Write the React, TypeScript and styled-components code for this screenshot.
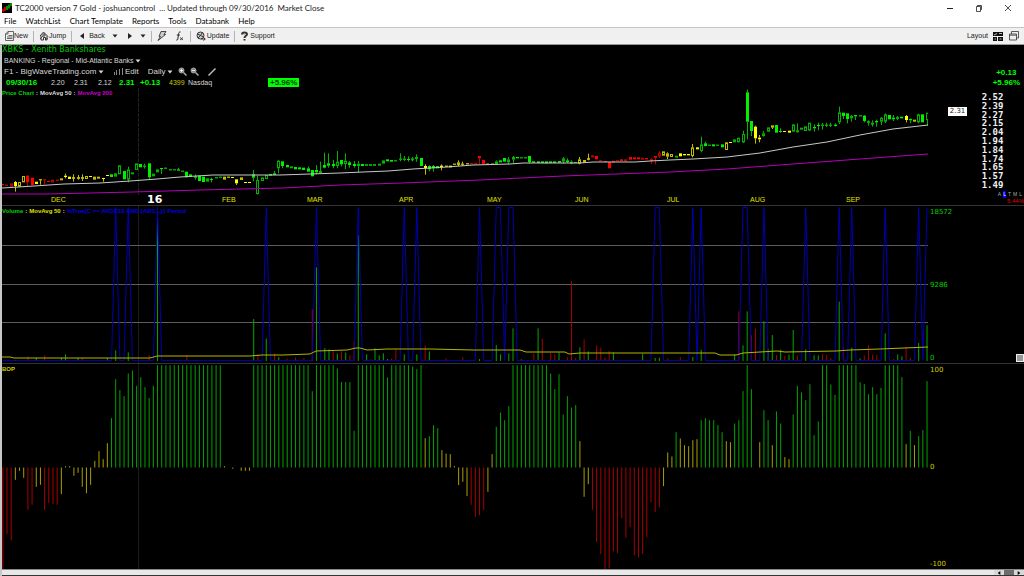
import React from 'react';
import styled, { createGlobalStyle } from 'styled-components';

const sans = '"Liberation Sans", Arial, sans-serif';
const wide = '"DejaVu Sans", Verdana, sans-serif';
const ui = 'Lato, "Noto Sans", sans-serif';

const GREEN = '#00ff00';
const YELLOW = '#ffff00';
const RED = '#ff0000';

const Global = createGlobalStyle`
  * { box-sizing: border-box; }
  body { margin: 0; background: #000; }
  button, select {
    appearance: none; border: 0; margin: 0; padding: 0;
    background: transparent; color: inherit; font: inherit;
  }
  svg { display: block; flex: none; }
`;

/* ---------- market data ---------- */

const STEP = 4.182;
const barX = (i: number) => 0.8 + STEP * i;
const full = (n: number): number[] => Array(n).fill(307);

const bop: number[] = [
  -305, -199, -219, -37, -10, -31, -127, -112, -58, -52, -127, -107, -110, -112, -80, 4, 4, -25, -16, -58,
  -77, -52, 20, 49, 25, 73, 148, 265, 232, 214, 282, 291, 245, 271, 241, 208, 245, ...full(16),
  4, 0, -4, 0, -10, -10, -10, ...full(14), 229, ...full(5), 297, 256, 256, 256, 110, ...full(7), 270,
  ...full(5), 303, 295, 307, 88, 94, 127, 118, 52, 42, 40, 4, -53, -43, -86, -112, -148, -143, -128, -73,
  40, 122, 165, 142, 184, ...full(9), 282, 235, 280, 159, 214, 180, 187, 79, -88, -50, -127, -223, -260,
  -305, -302, -251, -257, -152, -211, -179, -264, -270, -260, -210, -104, -134, -119, -56, 45, 33, 106, 87,
  67, 64, 82, 85, 142, 148, 142, 142, 127, 106, 79, 76, 132, 142, 229, 307, 235, 0, 76, 172, 142, 67, 168,
  132, 31, 25, 159, 245, 225, 202, 250, 97, 138, 307, 307, 249, 218, ...full(5), 256, 250, 220, 241, 220,
  239, ...full(4), 271, 70, 110, 67, 94, 112, 259,
];

/* index, bar height, direction */
const volume: [number, number, 'g' | 'r'][] = [
  [3, 3, 'g'], [6, 14, 'r'], [8, 10, 'g'], [10, 17, 'r'], [12, 3, 'g'], [14, 10, 'g'], [15, 20, 'g'],
  [18, 10, 'g'], [19, 10, 'r'], [25, 9, 'g'], [27, 32, 'g'], [30, 26, 'g'], [35, 17, 'r'], [37, 422, 'g'],
  [42, 3, 'r'], [44, 18, 'r'], [46, 3, 'g'], [60, 126, 'g'], [61, 20, 'r'], [63, 67, 'g'], [65, 23, 'r'],
  [66, 12, 'g'], [68, 7, 'r'], [70, 11, 'r'], [72, 9, 'r'], [74, 155, 'r'], [75, 281, 'g'], [77, 39, 'g'],
  [78, 35, 'g'], [79, 32, 'r'], [80, 22, 'g'], [81, 29, 'r'], [82, 25, 'g'], [83, 17, 'r'], [84, 59, 'r'],
  [85, 377, 'g'], [87, 20, 'g'], [88, 5, 'r'], [89, 38, 'g'], [90, 17, 'g'], [91, 23, 'g'], [92, 6, 'g'],
  [93, 8, 'r'], [94, 35, 'r'], [96, 20, 'g'], [99, 20, 'g'], [101, 47, 'r'], [102, 29, 'g'], [103, 3, 'r'],
  [105, 3, 'g'], [106, 8, 'r'], [110, 11, 'r'], [114, 6, 'g'], [118, 48, 'g'], [119, 20, 'g'],
  [121, 23, 'g'], [122, 98, 'g'], [124, 5, 'g'], [127, 22, 'r'], [128, 98, 'g'], [129, 67, 'r'],
  [131, 24, 'r'], [132, 20, 'r'], [133, 26, 'g'], [135, 11, 'r'], [136, 239, 'r'], [137, 9, 'r'],
  [138, 41, 'g'], [139, 65, 'r'], [140, 29, 'g'], [142, 47, 'r'], [143, 40, 'r'], [144, 10, 'r'],
  [145, 30, 'r'], [146, 26, 'g'], [153, 21, 'g'], [156, 9, 'g'], [157, 10, 'g'], [159, 8, 'r'],
  [162, 12, 'r'], [165, 12, 'g'], [167, 34, 'g'], [175, 20, 'g'], [176, 149, 'r'], [177, 47, 'g'],
  [178, 149, 'g'], [179, 77, 'r'], [180, 97, 'r'], [182, 119, 'g'], [183, 37, 'g'], [184, 78, 'g'],
  [185, 18, 'r'], [186, 34, 'g'], [187, 15, 'r'], [188, 19, 'g'], [189, 93, 'g'], [190, 17, 'r'],
  [192, 35, 'g'], [194, 17, 'g'], [195, 17, 'g'], [196, 20, 'r'], [197, 18, 'r'], [198, 9, 'r'],
  [200, 178, 'g'], [201, 41, 'r'], [203, 40, 'g'], [205, 8, 'g'], [206, 17, 'r'], [207, 47, 'r'],
  [208, 19, 'r'], [209, 18, 'r'], [211, 83, 'g'], [213, 6, 'r'], [214, 20, 'g'], [215, 14, 'g'],
  [216, 41, 'r'], [217, 9, 'r'], [219, 54, 'g'], [221, 107, 'g'],
];

const signals = new Set([
  27, 30, 37, 63, 75, 85, 96, 99, 114, 118, 119, 121, 122, 156, 157, 165, 167, 177, 178, 182, 192, 200,
  203, 211, 219, 221,
]);

/* body top, body bottom, colour + f(illed) / h(ollow), high, low */
type Candle = [number, number, string, number?, number?];
const candles: Candle[] = [
  [297, 300, 'rf'], [299, 302, 'rf'], [295, 305, 'rh'], [291, 303, 'yf', 288, 320], [291, 305, 'yh'],
  [273, 292, 'yh'], [272, 292, 'rf', 270, 305], [278, 300, 'rf'], [290, 297, 'yf'], [283, 286, 'yf', 283, 299],
  [283, 286, 'rf', 283, 298], [288, 291, 'rf'], [284, 292, 'rh'], [284, 287, 'rf'], [280, 286, 'yh'],
  [272, 276, 'yf', 266, 280], [275, 282, 'yf'], [277, 281, 'yf', 268, 290], [277, 281, 'yf', 270, 284],
  [277, 281, 'yf', 268, 288], [273, 282, 'yh'], [273, 276, 'yf'], [275, 284, 'yh'], [275, 281, 'yh'],
  [279, 282, 'yf', 279, 290], [270, 273, 'yf'], [268, 276, 'gf'], [265, 275, 'gh'], [241, 268, 'gh'],
  [258, 283, 'gf'], [253, 284, 'gh', 245, 292], [262, 266, 'gh'], [235, 255, 'gh'], [237, 247, 'gf'],
  [242, 245, 'gf', 236, 251], [235, 277, 'gf', 235, 283], [266, 274, 'gh'], [253, 262, 'gh'],
  [249, 252, 'gf', 249, 267], [248, 251, 'gf'], [253, 256, 'gf'], [253, 256, 'gf'], [253, 257, 'gf', 249, 257],
  [257, 260, 'gf'], [260, 277, 'gf'], [268, 276, 'gf'], [274, 278, 'gf', 268, 284], [272, 288, 'gf'],
  [275, 291, 'gf'], [280, 290, 'gh'], [282, 285, 'gf', 278, 292], [277, 280, 'gf'], [275, 278, 'gf'],
  [275, 284, 'yh'], [275, 278, 'yf'], [276, 279, 'yf'], [283, 295, 'yf', 283, 300], [277, 285, 'yh'],
  [291, 294, 'yf'], [291, 294, 'yf'], [268, 278, 'gf', 255, 289], [285, 327, 'gh', 272, 328],
  [277, 288, 'gh'], [270, 282, 'gh'], [267, 272, 'gf'], [265, 270, 'gf', 258, 270], [227, 250, 'gh', 225, 265],
  [229, 243, 'gf', 229, 250], [240, 247, 'gf'], [244, 250, 'gh'], [246, 253, 'gf'], [247, 253, 'gf'],
  [248, 255, 'gf'], [250, 260, 'gf', 244, 260], [255, 274, 'gf'], [255, 262, 'gf', 240, 268],
  [258, 264, 'gh', 230, 264], [240, 248, 'gf', 203, 250], [235, 242, 'gf', 205, 248], [237, 243, 'gf', 225, 250],
  [230, 243, 'gh', 198, 250], [225, 238, 'gf', 225, 244], [227, 237, 'gh', 205, 252], [232, 240, 'gf', 228, 248],
  [237, 243, 'gf', 228, 248], [236, 243, 'gh', 228, 262], [237, 243, 'gf'], [238, 242, 'gf'], [238, 242, 'gf'],
  [238, 242, 'gf'], [236, 242, 'gh'], [226, 236, 'gh'], [223, 229, 'gf'], [225, 230, 'gf'], [226, 229, 'gf'],
  [221, 224, 'gf', 205, 229], [221, 224, 'gf', 213, 228], [222, 225, 'gf', 214, 230], [220, 225, 'gh', 216, 229],
  [216, 222, 'gh', 208, 230], [219, 243, 'gf'], [243, 249, 'yf', 238, 269], [243, 253, 'gf', 241, 259],
  [243, 250, 'gf', 240, 260], [243, 250, 'gf'], [242, 246, 'yf', 238, 256], [242, 245, 'yf'], [242, 247, 'yf'],
  [236, 239, 'yf'], [232, 240, 'yh', 226, 243], [236, 239, 'yf', 230, 242], [235, 238, 'yf'], [235, 238, 'rf'],
  [235, 238, 'rf'], [213, 220, 'rf', 213, 237], [225, 237, 'rf'], [236, 239, 'yf'], [236, 239, 'yf'],
  [229, 237, 'gh', 226, 240], [226, 232, 'gf'], [219, 230, 'gf'], [223, 232, 'gh', 216, 238],
  [216, 224, 'gh', 213, 234], [216, 220, 'gf'], [217, 220, 'gf'], [217, 220, 'gf'], [213, 231, 'gf', 213, 236],
  [228, 233, 'gh'], [229, 234, 'gf'], [229, 234, 'gf'], [229, 235, 'gf'], [229, 234, 'gf'], [229, 234, 'gf'],
  [228, 233, 'gf'], [220, 230, 'gh', 216, 236], [226, 231, 'gf', 220, 234], [230, 236, 'gh', 226, 238],
  [231, 234, 'gf'], [223, 236, 'yh', 216, 238], [225, 233, 'yh'], [220, 224, 'yf', 206, 226],
  [211, 217, 'rh'], [213, 223, 'rf'], [226, 229, 'rf'], [228, 231, 'rf'], [231, 250, 'rf'], [227, 233, 'rh'],
  [226, 229, 'rf'], [223, 228, 'rf'], [223, 227, 'rh'], [216, 224, 'rf'], [217, 223, 'rf'], [217, 223, 'rf'],
  [218, 223, 'rh'], [219, 223, 'rf'], [223, 228, 'rf', 220, 237], [213, 218, 'rf', 213, 238],
  [203, 215, 'rh', 199, 219], [199, 212, 'yh'], [205, 215, 'yh', 202, 222], [207, 216, 'yh'], [212, 217, 'gh'],
  [205, 214, 'yf'], [207, 211, 'yf'], [207, 211, 'yf'], [187, 213, 'yh', 177, 217], [187, 193, 'yf'],
  [178, 198, 'gh', 155, 202], [175, 183, 'gf', 170, 184], [179, 182, 'gf'], [178, 184, 'gf'], [179, 182, 'gf'],
  [178, 187, 'gf'], [172, 195, 'yh'], [171, 174, 'yf'], [163, 172, 'gh'], [158, 172, 'gh'],
  [147, 172, 'gh', 137, 174], [22, 110, 'gf', 14, 163], [108, 138, 'gf', 108, 153], [125, 160, 'yf', 122, 176],
  [158, 163, 'yf', 150, 172], [145, 153, 'gh', 138, 155], [127, 140, 'gh'], [121, 128, 'yh', 121, 132],
  [120, 143, 'gf'], [138, 141, 'gf', 130, 143], [138, 141, 'yf'], [137, 143, 'yf'], [118, 140, 'gh'],
  [136, 140, 'gh', 115, 142], [128, 134, 'gh'], [124, 138, 'gh'], [113, 137, 'gh'], [126, 130, 'gf', 118, 140],
  [120, 123, 'gf', 113, 136], [119, 122, 'gf', 114, 134], [119, 122, 'gf', 113, 126], [119, 122, 'gf', 113, 126],
  [119, 123, 'gf', 115, 125], [82, 112, 'gh', 65, 117], [83, 93, 'gf', 83, 102], [85, 102, 'gf', 85, 115],
  [93, 100, 'gh', 90, 110], [90, 94, 'gf', 90, 105], [91, 94, 'gf'], [92, 108, 'gf', 90, 112],
  [109, 113, 'gf', 106, 122], [113, 118, 'gh', 106, 125], [108, 112, 'gf', 104, 125], [98, 110, 'gh', 96, 120],
  [88, 110, 'gh', 85, 114], [90, 103, 'gf'], [98, 103, 'gf', 90, 108], [97, 101, 'gf', 93, 106],
  [95, 100, 'gf'], [93, 105, 'yf', 90, 112], [102, 106, 'gf', 100, 115], [104, 110, 'yh'], [88, 112, 'gh', 86, 115],
  [88, 112, 'gf'], [83, 105, 'gh', 83, 122],
];

const priceAvg50 =
  '0,100 32,98 62,96 98,95 128,93 155,91 178,89 211,87 241,87 278,87 308,86 338,85 361,84 386,83 411,81 445,79 471,77 508,76 521,75 578,75 591,74 611,74 633,74 648,73 668,72 691,71 725,69 758,65 791,59 825,54 858,47 891,41 926,37';
const priceAvg200 =
  '0,106 45,106 131,104 198,102 281,100 338,97 400,95 478,92 561,88 668,84 725,81 791,76 858,71 926,66';
const volumeAvg =
  '0,151 8,151 12,152 148,152 155,150 248,150 260,149 281,149 308,148 314,145 345,144 354,142 358,142 365,144 385,143 428,143 472,144 518,144 524,146 563,146 567,148 578,147 713,147 718,149 734,149 741,147 758,146 775,145 783,146 834,145 848,144 878,143 926,141';

const priceScale = ['2.52', '2.39', '2.27', '2.15', '2.04', '1.94', '1.84', '1.74', '1.65', '1.57', '1.49'];
const months: [string, number][] = [
  ['DEC', 96], ['16', 75], ['FEB', 85], ['MAR', 92], ['APR', 88], ['MAY', 88], ['JUN', 92], ['JUL', 83],
  ['AUG', 96], ['SEP', 82],
];

/* ---------- window chrome ---------- */

const Page = styled.div`
  display: flex;
  flex-direction: column;
  min-height: 100vh;
  font-family: ${sans};
`;

const TitleBar = styled.header`
  display: flex;
  align-items: center;
  height: 15px;
  padding: 0 11px 0 2px;
  gap: 3px;
  background: #fff;
  color: #222;
  font: 8px/14px ${ui};
`;

const Title = styled.h1`
  flex: 1;
  margin: 0;
  font: inherit;
  white-space: pre;
`;

const WindowButton = styled.button`
  width: 9px;
  margin-left: 17px;
`;

const MenuBar = styled.nav`
  display: flex;
  height: 12px;
  padding-left: 4px;
  gap: 9px;
  background: #fff;
  color: #000;
  font: 8px/12px ${ui};
`;

const Toolbar = styled.div`
  display: flex;
  align-items: center;
  height: 18px;
  padding: 0 5px;
  background: #f0f0f0;
  border-top: 1px solid #c4c4c4;
  border-bottom: 1px solid #999;
  color: #222;
  font: 7px/16px ${sans};
`;

const ToolButton = styled.button<{ $gap?: number; $before?: number }>`
  display: flex;
  align-items: center;
  gap: ${(p) => p.$gap ?? 1}px;
  margin-left: ${(p) => p.$before ?? 0}px;
`;

const Divider = styled.span`
  width: 1px;
  height: 11px;
  margin: 0 5px;
  background: #b4b4b4;
`;

const Spacer = styled.span`
  flex: 1;
`;

/* ---------- chart panels ---------- */

const Workspace = styled.main`
  flex: 1;
  display: flex;
  flex-direction: column;
  border-left: 2px solid #c8c8c8;
  background: #000;
`;

const QuoteHeader = styled.section`
  display: flex;
  justify-content: space-between;
  height: 43px;
`;

const QuoteRows = styled.div`
  display: flex;
  flex-direction: column;
  color: #d8d8d8;
`;

const Symbol = styled.h2`
  margin: 0;
  color: #00c800;
  font: 8px/10px ${wide};
`;

const Line = styled.div<{ $size: number }>`
  display: flex;
  align-items: center;
  height: 11px;
  padding-left: 2px;
  font-size: ${(p) => p.$size}px;
  line-height: 11px;
`;

const Picker = styled.label<{ $before?: number }>`
  display: flex;
  align-items: center;
  gap: 1px;
  margin-left: ${(p) => p.$before ?? 0}px;
`;

const IconButton = styled.button<{ $before?: number }>`
  display: flex;
  align-items: center;
  gap: 2px;
  margin-left: ${(p) => p.$before ?? 0}px;
`;

const QuoteGrid = styled.div`
  display: grid;
  grid-template-columns: 45px 23px 24px 21px 21px 29px 19px 80px auto;
  align-items: center;
  height: 11px;
  padding-left: 4px;
  font-size: 7px;
  line-height: 11px;
`;

const Strong = styled.b`
  color: ${GREEN};
  font-size: 8px;
`;

const Trades = styled.span`
  color: #c8c800;
`;

const GainBadge = styled.b`
  padding: 0 2px;
  background: ${GREEN};
  color: #003c00;
  font-size: 8px;
  line-height: 9px;
`;

const Change = styled.div`
  display: flex;
  flex-direction: column;
  align-items: center;
  justify-content: flex-end;
  padding-right: 4px;
  color: ${GREEN};
  font: bold 8px/10px ${sans};
`;

const Panel = styled.section<{ $height?: number; $rule?: boolean }>`
  display: flex;
  ${(p) => (p.$height ? `height: ${p.$height}px;` : 'flex: 1; min-height: 206px;')}
  ${(p) => (p.$rule ? 'border-top: 1px solid #333;' : '')}
`;

const Plot = styled.div`
  position: relative;
  flex: 1;
  min-width: 0;
  display: flex;
  flex-direction: column;
`;

const PlotSvg = styled.svg`
  width: 100%;
  height: 0;
  flex: 1;
`;

const Legend = styled.div`
  position: absolute;
  left: 0;
  top: 1px;
  display: flex;
  gap: 2px;
  color: #ddd;
  font: bold 6px/8px ${sans};
  white-space: pre;
`;

const Key = styled.span<{ $color: string }>`
  color: ${(p) => p.$color};
`;

const TimeAxis = styled.div`
  display: grid;
  grid-template-columns: ${months.map((m) => `${m[1]}fr`).join(' ')};
  align-items: center;
  height: 10px;
  padding-left: 5.3%;
`;

const Month = styled.span<{ $year: boolean }>`
  color: ${(p) => (p.$year ? '#fff' : '#e0e000')};
  font: ${(p) => (p.$year ? `bold 11px/10px ${wide}` : `7px/10px ${sans}`)};
`;

const Axis = styled.div`
  display: flex;
  flex-direction: column;
  width: 96px;
`;

const PriceRow = styled.div`
  display: flex;
  justify-content: space-between;
  align-items: flex-start;
  height: 103px;
  padding: 5px 12px 0 20px;
`;

const LastPrice = styled.span`
  width: 19px;
  margin-top: 14px;
  background: #fff;
  color: #222;
  font: 7px/9px ${wide};
  text-align: center;
`;

const ScaleList = styled.ol`
  display: flex;
  flex-direction: column;
  justify-content: space-between;
  width: 39px;
  height: 96px;
  margin: 0;
  padding: 0;
  list-style: none;
  color: #f0f0f0;
  font: bold 9px/8px "DejaVu Sans Mono", monospace;
  text-align: center;
`;

const ScaleModes = styled.div`
  display: flex;
  justify-content: flex-end;
  gap: 2px;
  padding-right: 2px;
  color: #aaa;
  font: 5px/7px ${sans};
`;

const Mode = styled.button<{ $on?: boolean }>`
  color: ${(p) => (p.$on ? '#fff' : '#aaa')};
  background: ${(p) => (p.$on ? '#0000ff' : 'transparent')};
`;

const Range = styled.div`
  color: #e00000;
  font: 6px/7px ${sans};
  text-align: right;
`;

const Labels = styled.div<{ $color: string }>`
  flex: 1;
  display: flex;
  flex-direction: column;
  justify-content: space-between;
  padding: 2px 0 0 2px;
  color: ${(p) => p.$color};
  font: 7px/9px ${wide};
`;

const LastLabel = styled.div`
  display: flex;
  justify-content: space-between;
`;

const Grip = styled.button`
  width: 8px;
  height: 8px;
  border: 1px solid #eee;
  background: #999;
`;

const ScrollTrack = styled.footer`
  display: flex;
  justify-content: flex-end;
  height: 7px;
  background: #e8e8e8;
  border-top: 1px solid #888;
  border-bottom: 1px solid #333;
`;

const ScrollArrow = styled.button`
  display: flex;
  align-items: center;
  justify-content: center;
  width: 10px;
  background: #d8d8d8;
`;

const ScrollThumb = styled.span`
  width: 10px;
  background: #6c6c6c;
`;

/* ---------- small drawings ---------- */

const Arrow = ({ dir = 'down', size = 6 }: { dir?: 'down' | 'left' | 'right'; size?: number }) => (
  <svg width={size} height={size} viewBox="0 0 6 6" fill="currentColor" aria-hidden="true">
    <path d={dir === 'down' ? 'M.5 1.5h5L3 4.5z' : dir === 'left' ? 'M5 0v6L1 3z' : 'M1 0v6L5 3z'} />
  </svg>
);

const Crosshair = ({ height, dashed }: { height: number; dashed?: boolean }) => (
  <line
    x1="136.5"
    x2="136.5"
    y1="0"
    y2={height}
    stroke={dashed ? '#222' : '#1c1c1c'}
    strokeDasharray={dashed ? '4 1' : undefined}
  />
);

const tone = (c: string) => (c === 'g' ? '#00f000' : c === 'r' ? RED : YELLOW);

const PricePlot = () => (
  <PlotSvg viewBox="0 0 926 107" preserveAspectRatio="none" role="img" aria-label="Price chart">
    <Crosshair height={107} dashed />
    {candles.map(([top, bottom, style, high = top, low = bottom], i) => {
      const y = (v: number) => v / 3 - 3;
      const c = tone(style[0]);
      const x = Math.round(barX(i) - 0.5) + 0.5;
      const t = y(top);
      const h = y(bottom) - t;
      return (
        <g key={i} stroke={c} strokeWidth="1">
          {high < top && <line x1={x} x2={x} y1={y(high)} y2={t} opacity="0.75" />}
          {low > bottom && <line x1={x} x2={x} y1={t + h} y2={y(low)} opacity="0.75" />}
          {style[1] === 'f' ? (
            <rect x={x - 1.5} y={t} width="3" height={h} fill={c} stroke="none" />
          ) : (
            <rect x={x - 1} y={t + 0.5} width="2" height={Math.max(h - 1, 1)} fill="#000" opacity="0.75" />
          )}
        </g>
      );
    })}
    <polyline points={priceAvg50} fill="none" stroke="#c8c8c8" strokeWidth="1" />
    <polyline points={priceAvg200} fill="none" stroke="#b400b4" strokeWidth="1" />
  </PlotSvg>
);

const VolumePlot = () => {
  const base = 155;
  return (
    <PlotSvg viewBox="0 0 926 157" preserveAspectRatio="none" role="img" aria-label="Volume chart">
      <Crosshair height={157} />
      {[39.5, 78.5, 116.5].map((y) => (
        <line key={y} x1="0" x2="926" y1={y} y2={y} stroke="#5c5c5c" />
      ))}
      {volume.map(([i, h, dir]) => (
        <line
          key={i}
          x1={barX(i)}
          x2={barX(i)}
          y1={base - h / 3}
          y2={base}
          stroke={dir === 'g' ? '#00a800' : '#a80000'}
        />
      ))}
      <polyline
        points={bop.map((_, i) => `${barX(i)},${signals.has(i) ? 1.5 : base - 0.5}`).join(' ')}
        fill="none"
        stroke="#0000b0"
        strokeWidth="1"
      />
      <polyline points={volumeAvg} fill="none" stroke="#b4b400" strokeWidth="1" />
    </PlotSvg>
  );
};

const BopPlot = () => {
  const zero = 103.5;
  return (
    <PlotSvg viewBox="0 0 926 205" preserveAspectRatio="none" role="img" aria-label="Balance of power">
      <Crosshair height={205} />
      {bop.map((v, i) => (
        <line
          key={i}
          x1={barX(i)}
          x2={barX(i)}
          y1={zero}
          y2={zero - v / 3}
          stroke={v > 90 ? '#00a400' : v < -90 ? '#a80000' : '#a8a000'}
        />
      ))}
    </PlotSvg>
  );
};

export default function App() {
  return (
    <Page>
      <Global />
      <TitleBar>
        <svg width="10" height="12" viewBox="0 0 10 12" aria-hidden="true">
          <rect y="1" width="10" height="10" fill="#000" />
          <path d="M1 7v3M3 5v4" stroke={RED} strokeWidth="1.5" />
          <path d="M5 4v4M7 2.500v4M9 1v3" stroke="#00c000" strokeWidth="1.500" />
        </svg>
        <Title>TC2000 version 7 Gold - joshuancontrol  ... Updated through 09/30/2016  Market Close</Title>
        <WindowButton aria-label="Minimize">
          <svg width="8" height="8" viewBox="0 0 8 8"><path d="M1 4.500h6" stroke="#222" /></svg>
        </WindowButton>
        <WindowButton aria-label="Restore">
          <svg width="8" height="8" viewBox="0 0 8 8" fill="none" stroke="#222" strokeWidth=".8">
            <path d="M1.500 2.500h4v5h-4zM2.500 2.500v-1h4v4h-1" />
          </svg>
        </WindowButton>
        <WindowButton aria-label="Close">
          <svg width="8" height="8" viewBox="0 0 8 8"><path d="M1 1l6 6M7 1L1 7" stroke="#222" strokeWidth=".8" /></svg>
        </WindowButton>
      </TitleBar>

      <MenuBar>
        {['File', 'WatchList', 'Chart Template', 'Reports', 'Tools', 'Databank', 'Help'].map((m) => (
          <button key={m}>{m}</button>
        ))}
      </MenuBar>

      <Toolbar>
        <ToolButton $gap={0}>
          <svg width="9" height="10" viewBox="0 0 9 10" fill="none" stroke="#444" strokeWidth=".8">
            <path d="M3 .5h5.500v9H.5V3zM3 .5V3H.5M3.500 4.500h4M2 6h5.500M2 7.500h5.500" />
          </svg>
          New
        </ToolButton>
        <Divider />
        <ToolButton $gap={0}>
          <svg width="10" height="10" viewBox="0 0 10 10" fill="none" stroke="#333">
            <path d="M1 5L4.500 1 9 5.500M2 4.500V9h2.500V6.500h2V9H8V5" />
            <circle cx="5" cy="4" r="1.200" />
            <path d="M1 8l3-3M6 9l3-2" strokeWidth=".8" />
          </svg>
          Jump
        </ToolButton>
        <Divider />
        <ToolButton $gap={4} $before={2}><Arrow dir="left" />Back</ToolButton>
        <ToolButton $before={7} aria-label="Back history"><Arrow /></ToolButton>
        <ToolButton $before={9} aria-label="Forward"><Arrow dir="right" /></ToolButton>
        <ToolButton $before={7} aria-label="Forward history"><Arrow /></ToolButton>
        <Divider />
        <ToolButton aria-label="Quick scan">
          <svg width="10" height="10" viewBox="0 0 10 10" fill="#ccc" stroke="#222" strokeWidth=".8">
            <path d="M4 .5h5L7 3.500h1.500L1 9.500 3.500 5.500H2z" />
          </svg>
        </ToolButton>
        <ToolButton $before={8} aria-label="Formula">
          <svg width="10" height="10" viewBox="0 0 10 10" fill="none" stroke="#222">
            <path d="M5.500 1C4 .5 3.700 2 3.500 3.500L2.800 8C2.600 9 2 9.300 1.200 9M1.800 4h3" />
            <path d="M5 6.500l3 2.500M8 6.500L5 9" strokeWidth=".8" />
          </svg>
        </ToolButton>
        <Divider />
        <ToolButton>
          <svg width="10" height="10" viewBox="0 0 10 10" fill="none" stroke="#333">
            <circle cx="4.500" cy="4.500" r="3.500" fill="#ccc" />
            <path d="M1.500 3l3 1.500 2-3M2 7l2.500-2.500L8 6M5 8h4M7.500 6.500L9.300 8 7.500 9.500" />
          </svg>
          Update
        </ToolButton>
        <Divider />
        <ToolButton>
          <svg width="9" height="10" viewBox="0 0 9 10" fill="none" stroke="#333" strokeWidth="2">
            <path d="M2 3.500C2 .8 7 .8 7 3.200 7 5 4.500 4.500 4.500 7M4.500 8v1.500" />
            <path d="M3.500 3.500h1" stroke="#999" strokeWidth="1" />
          </svg>
          Support
        </ToolButton>
        <Spacer />
        <ToolButton $gap={5}>
          Layout
          <svg width="10" height="9" viewBox="0 0 10 9" fill="#111">
            <path d="M0 0h10v4H0zM0 5h4v4H0zM5 5h5v4H5z" />
            <path d="M1 3l3-1.500M6 1.500h3M1.500 7h1.500M6.500 7h2" stroke="#ddd" strokeWidth=".8" />
          </svg>
        </ToolButton>
        <ToolButton $before={6} aria-label="Windows">
          <svg width="10" height="10" viewBox="0 0 10 10" fill="none" stroke="#333" strokeWidth=".8">
            <path d="M.5 3h7v6h-7zM2.500 3V.5h7v6.500H7.500M.5 4.200h7" />
          </svg>
        </ToolButton>
      </Toolbar>

      <Workspace>
        <QuoteHeader>
          <QuoteRows>
            <Symbol>XBKS - Xenith Bankshares</Symbol>
            <Line $size={7}>
              <Picker>
                <select aria-label="Industry"><option>BANKING - Regional - Mid-Atlantic Banks</option></select>
                <Arrow />
              </Picker>
            </Line>
            <Line $size={8}>
              <Picker>
                <select aria-label="Template"><option>F1 - BigWaveTrading.com</option></select>
                <Arrow />
              </Picker>
              <IconButton $before={10}>
                <svg width="9" height="7" viewBox="0 0 9 7" stroke="#888">
                  <path d="M.5 4v3M2.500 2v5M5.500 1v6M8.500 0v7" />
                </svg>
                Edit
              </IconButton>
              <Picker $before={9}>
                <select aria-label="Period"><option>Daily</option></select>
                <Arrow />
              </Picker>
              {['Zoom in', 'Zoom out'].map((name, i) => (
                <IconButton key={name} $before={i ? 3 : 5} aria-label={name}>
                  <svg width="9" height="9" viewBox="0 0 9 9" fill="#888" stroke="#aaa">
                    <circle cx="3.500" cy="3.500" r="2.500" />
                    <path d="M5.500 5.500L8.500 8.500" strokeWidth="1.500" />
                    <path d={i ? 'M2 3.500h3' : 'M2 3.500h3M3.500 2v3'} stroke="#fff" strokeWidth=".8" />
                  </svg>
                </IconButton>
              ))}
              <IconButton $before={9} aria-label="Draw line">
                <svg width="8" height="8" viewBox="0 0 8 8">
                  <path d="M.5 7.500L7.500.5" stroke="#bbb" strokeWidth="1.500" />
                </svg>
              </IconButton>
            </Line>
            <QuoteGrid>
              <Strong>09/30/16</Strong>
              <span>2.20</span>
              <span>2.31</span>
              <span>2.12</span>
              <Strong>2.31</Strong>
              <Strong>+0.13</Strong>
              <Trades>4399</Trades>
              <span>Nasdaq</span>
              <GainBadge>+5.96%</GainBadge>
            </QuoteGrid>
          </QuoteRows>
          <Change>
            <span>+0.13</span>
            <span>+5.96%</span>
          </Change>
        </QuoteHeader>

        <Panel $height={117}>
          <Plot>
            <Legend>
              <Key $color="#00d000">Price Chart</Key>:<Key $color="#dddddd">MovAvg 50</Key>:
              <Key $color="#c800c8">MovAvg 200</Key>
            </Legend>
            <PricePlot />
            <TimeAxis>
              {months.map(([m]) => (
                <Month key={m} $year={m === '16'}>{m}</Month>
              ))}
            </TimeAxis>
          </Plot>
          <Axis>
            <PriceRow>
              <LastPrice>2.31</LastPrice>
              <ScaleList>
                {priceScale.map((p) => <li key={p}>{p}</li>)}
              </ScaleList>
            </PriceRow>
            <ScaleModes>
              <Mode>A</Mode><Mode $on>L</Mode><Mode>T</Mode><Mode>M</Mode><Mode>L</Mode>
            </ScaleModes>
            <Range>5.44%</Range>
          </Axis>
        </Panel>

        <Panel $height={158} $rule>
          <Plot>
            <Legend>
              <Key $color="#00d000">Volume</Key>:<Key $color="#e0e000">MovAvg 50</Key>:
              <Key $color="#0000e0">%True(C &gt;= AVGC10 AND (ABS...)1 Period</Key>
            </Legend>
            <VolumePlot />
          </Plot>
          <Axis>
            <Labels $color="#00d000">
              <span>18572</span>
              <span>9286</span>
              <LastLabel>0<Grip aria-label="Resize panel" /></LastLabel>
            </Labels>
          </Axis>
        </Panel>

        <Panel $rule>
          <Plot>
            <Legend>
              <Key $color="#d0d000">BOP</Key>
            </Legend>
            <BopPlot />
          </Plot>
          <Axis>
            <Labels $color="#d0d000">
              <span>100</span>
              <span>0</span>
              <span>-100</span>
            </Labels>
          </Axis>
        </Panel>

        <ScrollTrack>
          <ScrollArrow aria-label="Scroll left"><Arrow dir="left" size={4} /></ScrollArrow>
          <ScrollThumb />
          <ScrollArrow aria-label="Scroll right"><Arrow dir="right" size={4} /></ScrollArrow>
        </ScrollTrack>
      </Workspace>
    </Page>
  );
}
